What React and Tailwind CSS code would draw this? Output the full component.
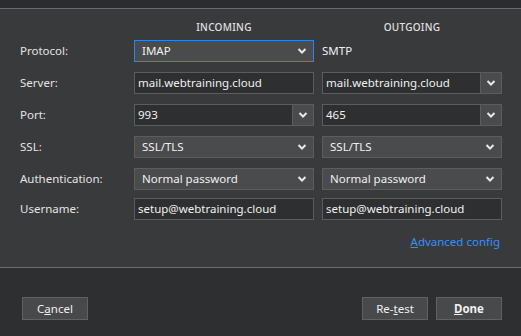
import React from "react";

const Chevron = () => (
  <svg width="10" height="6" viewBox="0 0 10 6" className="block">
    <polyline points="1.5,1 5,4.5 8.5,1" fill="none" stroke="#e8e8e8" strokeWidth="2" />
  </svg>
);

const Select = ({ value, focused }) => (
  <div
    className={`h-[22px] flex items-center justify-between pl-[7px] pr-[6px] bg-[#4a4b4d] border ${
      focused ? "border-[#2f86e0]" : "border-[#5b5c5e]"
    } text-[#f0f0f0]`}
  >
    <span>{value}</span>
    <Chevron />
  </div>
);

const Input = ({ value }) => (
  <div className="h-[22px] flex items-center pl-[3px] bg-[#2e2f31] border border-[#5b5c5e] text-[#f0f0f0]">
    <span>{value}</span>
  </div>
);

const Combo = ({ value }) => (
  <div className="h-[22px] flex bg-[#2e2f31] border border-[#5b5c5e] text-[#f0f0f0]">
    <div className="flex-1 flex items-center pl-[3px]">{value}</div>
    <div className="w-[21px] flex items-center justify-center bg-[#4a4b4d] border-l border-[#5b5c5e]">
      <Chevron />
    </div>
  </div>
);

const Label = ({ children }) => (
  <div className="h-[22px] flex items-center text-[#e4e4e4]">{children}</div>
);

export default function App() {
  return (
    <div
      className="w-[521px] h-[336px] flex flex-col bg-[#2e2f31] text-[11.5px] overflow-hidden"
      style={{ fontFamily: '"Noto Sans", "Open Sans", sans-serif' }}
    >
      <div className="h-[8px] bg-[#2b2c2f] border-b border-[#6a6b6d] box-content" />
      <div className="h-[258px] bg-[#393a3c] pl-[20px] pr-[19px] flex flex-col">
        <div className="grid grid-cols-[106px_180px_180px] gap-x-[8px] pt-[11px] h-[31px]">
          <div />
          <div className="text-center text-[10px] leading-[14px] font-medium text-[#e0e0e0] tracking-[0.3px]">INCOMING</div>
          <div className="text-center text-[10px] leading-[14px] font-medium text-[#e0e0e0] tracking-[0.3px]">OUTGOING</div>
        </div>
        <div className="grid grid-cols-[106px_180px_180px] gap-x-[8px] gap-y-[10px] auto-rows-[22px]">
          <Label>Protocol:</Label>
          <Select value="IMAP" focused />
          <div className="h-[22px] flex items-center text-[#f0f0f0]">SMTP</div>

          <Label>Server:</Label>
          <Input value="mail.webtraining.cloud" />
          <Combo value="mail.webtraining.cloud" />

          <Label>Port:</Label>
          <Combo value="993" />
          <Combo value="465" />

          <Label>SSL:</Label>
          <Select value="SSL/TLS" />
          <Select value="SSL/TLS" />

          <Label>Authentication:</Label>
          <Select value="Normal password" />
          <Select value="Normal password" />
        </div>
        <div className="grid grid-cols-[106px_180px_180px] gap-x-[8px] mt-[8px]">
          <Label>Username:</Label>
          <Input value="setup@webtraining.cloud" />
          <Input value="setup@webtraining.cloud" />
        </div>
        <div className="flex justify-end mt-[14px] pr-[2px]">
          <span className="text-[#3b8ff0] leading-[16px]">
            <span className="underline">A</span>dvanced config
          </span>
        </div>
      </div>
      <div className="h-px bg-[#6a6b6d]" />
      <div className="flex-1 flex items-start pt-[29px] pl-[22px] pr-[19px]">
        <button className="w-[66px] h-[23px] bg-[#48494b] border border-[#606163] text-[#f0f0f0] flex items-center justify-center">
          C<span className="underline">a</span>ncel
        </button>
        <div className="flex-1" />
        <button className="w-[66px] h-[23px] bg-[#48494b] border border-[#606163] text-[#f0f0f0] flex items-center justify-center">
          Re-<span className="underline">t</span>est
        </button>
        <button className="ml-[8px] w-[66px] h-[23px] bg-[#48494b] border border-[#606163] text-[#f0f0f0] font-bold flex items-center justify-center">
          <span className="underline">D</span>one
        </button>
      </div>
    </div>
  );
}
